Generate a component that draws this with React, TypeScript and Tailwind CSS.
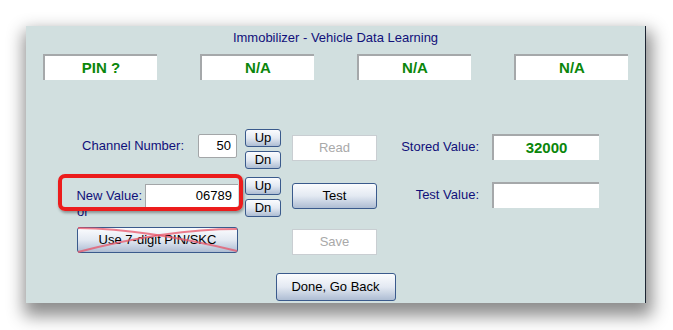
import React from 'react';

const font = { fontFamily: '"Liberation Sans", Arial, sans-serif' };

// Win-style gradient push button
const Btn: React.FC<{ className?: string; children: React.ReactNode }> = ({ className = '', children }) => (
    <div className={`flex items-center justify-center rounded-[3px] border border-[#3a5a8c] bg-gradient-to-b from-[#fbfcfe] via-[#e3e9f2] to-[#aebdd3] text-[13px] text-black ${className}`}>
        {children}
    </div>
);

const DisabledBtn: React.FC<{ children: React.ReactNode }> = ({ children }) => (
    <div className="flex h-[26px] w-[85px] items-center justify-center border border-[#c9ced2] bg-white text-[13px] text-[#a9a9a9]">
        {children}
    </div>
);

const StatusBox: React.FC<{ value: string }> = ({ value }) => (
    <div className="flex h-[26px] w-[114px] items-center justify-center border-t-2 border-l-2 border-[#a5a8aa] bg-white text-[15px] font-bold text-[#0b860b]">
        {value}
    </div>
);

export default function App() {
    return (
        <div className="h-[330px] w-[673px] bg-white pl-[26px] pt-[26px]" style={font}>
            <div className="relative flex h-[277px] w-[620px] flex-col border-r border-[#1c2533] bg-[#d1dfdf] shadow-[2px_9px_16px_4px_rgba(0,0,0,0.45)]">
                {/* Title */}
                <div className="pt-[4px] text-center text-[13px] leading-[16px] text-[#10107a]">
                    Immobilizer - Vehicle Data Learning
                </div>

                {/* Status boxes */}
                <div className="mt-[8px] flex justify-center gap-[43px]">
                    <StatusBox value="PIN ?" />
                    <StatusBox value="N/A" />
                    <StatusBox value="N/A" />
                    <StatusBox value="N/A" />
                </div>

                {/* Main controls */}
                <div className="mt-[49px] flex">
                    {/* Left column */}
                    <div className="flex w-[212px] flex-col">
                        <div className="mt-[5px] flex items-center justify-end gap-[14px] pr-[1px]">
                            <span className="text-[13px] text-[#10107a]">Channel Number:</span>
                            <div className="flex h-[24px] w-[39px] items-center justify-end rounded-[2px] border border-[#a3a6a8] bg-white pr-[5px] text-[13px] text-black">
                                50
                            </div>
                        </div>
                        <div className="mt-[26px] flex items-center justify-end gap-[3px]">
                            <span className="text-[13px] text-[#10107a]">New Value:</span>
                            <div className="flex h-[23px] w-[93px] items-center justify-end border-t border-l border-[#a3a6a8] bg-white pr-[6px] text-[13px] text-black">
                                06789
                            </div>
                        </div>
                        <div className="ml-[51px] mt-[-3px] h-[15px] text-[13px] leading-[15px] text-[#10107a]">or</div>
                        <div className="relative ml-[51px] mt-[8px] w-[161px]">
                            <Btn className="h-[26px] w-[161px]">Use 7-digit PIN/SKC</Btn>
                            <svg className="absolute left-0 top-0" width="161" height="26" viewBox="0 0 161 26">
                                <path d="M1 1 Q70 2 160 24" stroke="rgba(232,84,104,0.75)" strokeWidth="2" fill="none" />
                                <path d="M1 25 Q90 2 160 2" stroke="rgba(232,84,104,0.75)" strokeWidth="2" fill="none" />
                            </svg>
                        </div>
                    </div>

                    {/* Up / Dn column */}
                    <div className="ml-[7px] flex w-[36px] flex-col">
                        <Btn className="h-[18px] w-[36px]">Up</Btn>
                        <Btn className="mt-[4px] h-[18px] w-[36px]">Dn</Btn>
                        <Btn className="mt-[8px] h-[18px] w-[36px]">Up</Btn>
                        <Btn className="mt-[4px] h-[18px] w-[36px]">Dn</Btn>
                    </div>

                    {/* Action column */}
                    <div className="ml-[11px] flex w-[85px] flex-col">
                        <div className="mt-[6px]">
                            <DisabledBtn>Read</DisabledBtn>
                        </div>
                        <Btn className="mt-[22px] h-[26px] w-[85px]">Test</Btn>
                        <div className="mt-[20px]">
                            <DisabledBtn>Save</DisabledBtn>
                        </div>
                    </div>

                    {/* Values column */}
                    <div className="flex w-[222px] flex-col">
                        <div className="mt-[5px] flex items-center justify-end gap-[13px]">
                            <span className="text-[13px] text-[#10107a]">Stored Value:</span>
                            <div className="flex h-[26px] w-[107px] items-center justify-center border-t-2 border-l-2 border-[#a5a8aa] bg-white text-[15px] font-bold text-[#0b860b]">
                                32000
                            </div>
                        </div>
                        <div className="mt-[22px] flex items-center justify-end gap-[13px]">
                            <span className="text-[13px] text-[#10107a]">Test Value:</span>
                            <div className="h-[26px] w-[107px] border-t-2 border-l-2 border-[#a5a8aa] bg-white" />
                        </div>
                    </div>
                </div>

                {/* Done */}
                <div className="mt-[18px] flex justify-center">
                    <Btn className="h-[28px] w-[120px]">Done, Go Back</Btn>
                </div>

                {/* Red highlight annotation */}
                <div className="absolute left-[32px] top-[148px] h-[37px] w-[185px] rounded-[7px] border-4 border-[#ec1c1c] shadow-[1px_2px_3px_rgba(0,0,0,0.35)]" />
            </div>
        </div>
    );
}
